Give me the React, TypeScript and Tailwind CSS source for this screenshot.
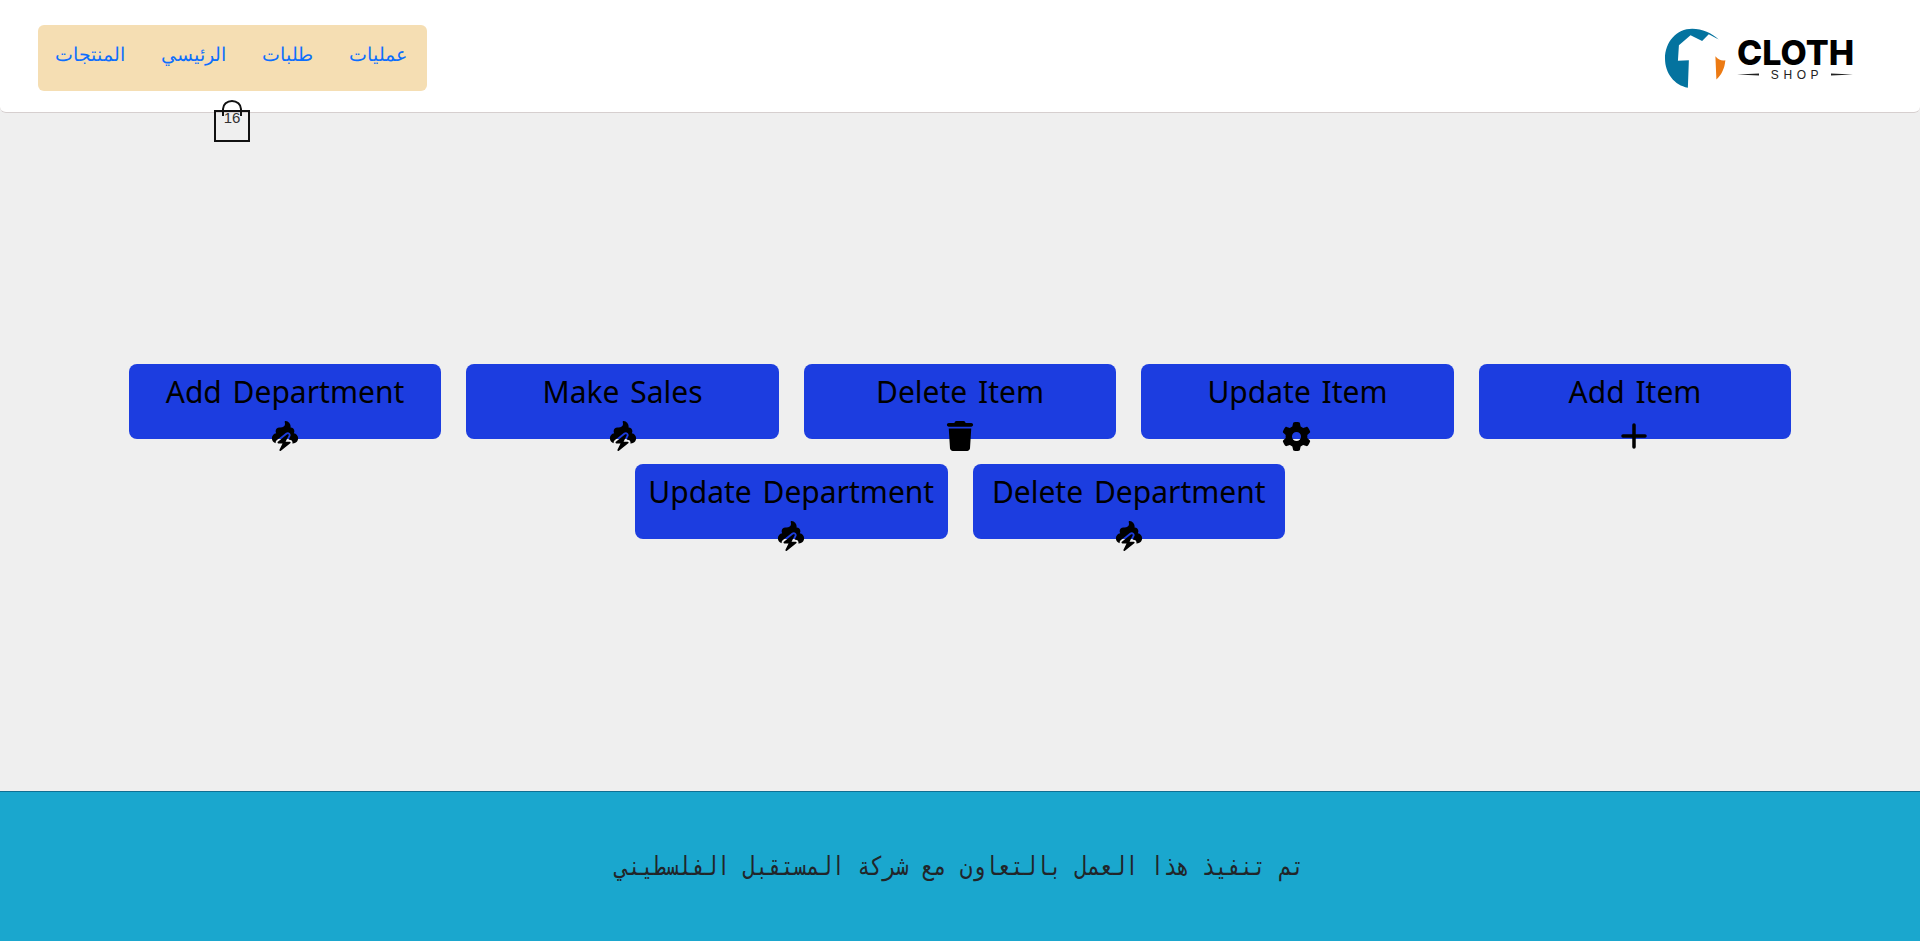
import type { ReactNode } from "react";
import { FaPooStorm, FaTrash, FaGear } from "react-icons/fa6";

function Logo() {
  return (
    <div className="flex items-center gap-[10px] w-[188px]">
      <svg width="63" height="63" viewBox="70 50 190 190" className="shrink-0">
        <path d="M235 88 C215 68 185 55 155 55 C108 55 73 95 73 145 C73 190 102 226 142 233 L145 150 L112 152 L115 105 L150 75 L185 92 L205 72 Z" fill="#04739f" />
        <path d="M225 138 C235 150 245 152 255 150 C253 175 243 195 228 208 Z" fill="#ec7a13" />
      </svg>
      <div className="flex flex-col items-stretch w-[116px] pt-[2px]">
        <div className="font-['Inter',sans-serif] font-extrabold text-[34px] leading-[31px] text-black text-center">CLOTH</div>
        <div className="flex items-center justify-between">
          <svg width="22" height="3" viewBox="0 0 22 3"><path d="M0 1.5 L22 0.6 L22 2.4 Z" fill="#222" /></svg>
          <div className="font-['Liberation_Sans',sans-serif] text-[12px] leading-[14px] tracking-[4.6px] mr-[-4px] text-[#222]">SHOP</div>
          <svg width="22" height="3" viewBox="0 0 22 3"><path d="M22 1.5 L0 0.6 L0 2.4 Z" fill="#222" /></svg>
        </div>
      </div>
    </div>
  );
}

function ActionButton({ label, children }: { label: string; children: ReactNode }) {
  return (
    <div className="w-[312.5px] h-[75px] rounded-lg bg-[#1c3de0] flex flex-col items-center">
      <div className="text-[30px] leading-[42px] pt-[7px] h-[52px] shrink-0 text-black font-['Noto_Sans',sans-serif] [word-spacing:3px]">{label}</div>
      <div className="h-[40px] shrink-0 flex items-center justify-center text-black">{children}</div>
    </div>
  );
}

function Poo() {
  return <FaPooStorm className="text-[30px]" />;
}

export default function App() {
  return (
    <div className="h-[941px] flex flex-col bg-[#efefef] overflow-hidden">
      <header className="relative h-[113px] bg-white rounded-b-md border-b border-[#d6cfcf] flex items-center justify-between pt-1 pl-[38px] pr-[68px] shrink-0">
        <nav dir="rtl" className="w-[389px] h-[66px] bg-[#f5deb3] rounded-md flex items-center gap-[36px] pr-5 pb-1 text-[18.5px] text-[#0d6efd] font-['Liberation_Serif',serif]">
          <a>عمليات</a>
          <a>طلبات</a>
          <a>الرئيسي</a>
          <a>المنتجات</a>
        </nav>
        <div className="absolute left-[214px] top-[100px] w-9 h-[43px]">
          <svg width="36" height="43" viewBox="0 0 36 43" fill="none" stroke="#111" strokeWidth="2">
            <rect x="1" y="11" width="34" height="30" />
            <path d="M9 16 V9 a9 8 0 0 1 18 0 V16" />
          </svg>
          <div className="absolute left-0 right-0 top-[10px] text-center text-[15px] leading-4 text-[#333] font-['Liberation_Sans',sans-serif]">16</div>
        </div>
        <Logo />
      </header>
      <main className="flex-1 flex flex-wrap content-center justify-center gap-[25px] px-[128px] pb-px">
        <ActionButton label="Add Department"><Poo /></ActionButton>
        <ActionButton label="Make Sales"><Poo /></ActionButton>
        <ActionButton label="Delete Item"><FaTrash className="text-[30px]" /></ActionButton>
        <ActionButton label="Update Item"><FaGear className="text-[29px] -translate-x-px" /></ActionButton>
        <ActionButton label="Add Item">
          <svg width="28" height="28" viewBox="0 0 28 28" stroke="black" strokeWidth="3.5" strokeLinecap="round"><path d="M13 3v22M2 14h22" /></svg>
        </ActionButton>
        <ActionButton label="Update Department"><Poo /></ActionButton>
        <ActionButton label="Delete Department"><Poo /></ActionButton>
      </main>
      <footer dir="rtl" className="h-[150px] shrink-0 bg-[#1aa7ce] border-t border-[#0f6f93] flex items-center justify-center text-[26px] text-[#212529] font-['DejaVu_Sans_Mono',monospace]">
        <span className="scale-x-[0.815] whitespace-nowrap">تم تنفيذ هذا العمل بالتعاون مع شركة المستقبل الفلسطيني</span>
      </footer>
    </div>
  );
}
